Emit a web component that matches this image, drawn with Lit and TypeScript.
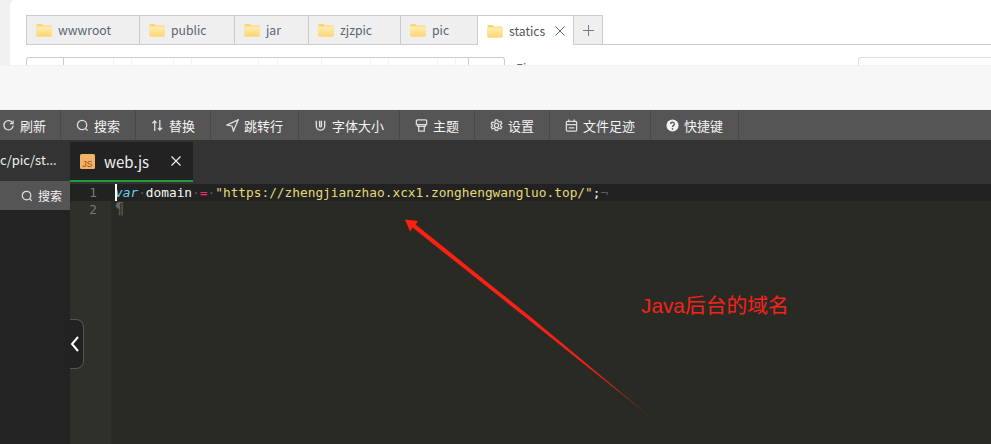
import { LitElement, html, css, svg } from "lit";
import { customElement } from "lit/decorators.js";

const folder = html`<svg class="folder" viewBox="0 0 16 14" width="16" height="14">
  <defs><linearGradient id="fg" x1="0" y1="0" x2="0" y2="1"><stop offset="0" stop-color="#ffeeb4"/><stop offset="1" stop-color="#ffd572"/></linearGradient></defs>
  <path d="M0.5 2a1 1 0 0 1 1-1h4l1.5 1.5H14.500a1 1 0 0 1 1 1V12.500a1 1 0 0 1-1 1h-13a1 1 0 0 1-1-1z" fill="#ffd36b"/>
  <rect x="0.500" y="3.500" width="15" height="10" rx="1" fill="url(#fg)"/>
</svg>`;

const I = (body: unknown) => html`<svg class="ico" viewBox="0 0 14 14" width="13" height="13" fill="none" stroke="#ddd" stroke-width="1.400">${body}</svg>`;

const tools = [
  { w: 61, t: "刷新", pr: 12, i: I(svg`<path d="M11.500 4.500A5 5 0 1 0 12 7"/><path d="M12 1.500V5H8.500" stroke-width="1.200"/>`) },
  { w: 75, t: "搜索", pr: 0, i: I(svg`<circle cx="6.500" cy="6.500" r="5"/><path d="M10 10l2.500 2.500"/>`) },
  { w: 75, t: "替换", pr: 0, i: I(svg`<path d="M4 13V2M1.500 4.500L4 2l2 2.500M9.500 1v11M7.500 9.500l2 2.500 2.500-2.500"/>`) },
  { w: 88, t: "跳转行", pr: 0, i: I(svg`<path d="M13 1L1 6.500l5.500 1L8 13z"/>`) },
  { w: 101, t: "字体大小", pr: 0, i: I(svg`<path d="M2.500 2v5.500a4.500 4.500 0 0 0 9 0V2M6 2v5.500a1 1 0 0 0 2 0V2" stroke-width="1.500"/>`) },
  { w: 75, t: "主题", pr: 0, i: I(svg`<path d="M3 6H1.500V2a1 1 0 0 1 1-1h9a1 1 0 0 1 1 1v4H11M3 6v2h8V6M4 8v5h6V8M1.500 6h11"/>`) },
  { w: 75, t: "设置", pr: 0, i: I(svg`<circle cx="7" cy="7" r="2.300"/><path d="M5.800 1h2.400l.4 1.600 1.500.7 1.500-.7 1.100 2-1.200 1.200v1.600l1.200 1.200-1.100 2-1.500-.7-1.500.7-.4 1.600H5.800l-.4-1.600-1.500-.7-1.500.7-1.100-2 1.200-1.200V6.400L1.300 5.200l1.100-2 1.500.7 1.500-.7z"/>`) },
  { w: 101, t: "文件足迹", pr: 0, i: I(svg`<rect x="1.500" y="2.500" width="11" height="10.500" rx="1"/><path d="M4 .5v3M10 .5v3M1.500 6h11M4 9.500h6"/>`) },
  { w: 88, t: "快捷键", pr: 0, i: html`<svg class="ico" viewBox="0 0 14 14" width="13" height="13"><circle cx="7" cy="7" r="6.500" fill="#f2f2f2"/><path d="M5 5.500a2 2 0 1 1 3 1.700c-.7.400-1 .8-1 1.500" fill="none" stroke="#555" stroke-width="1.400"/><circle cx="7" cy="10.600" r=".9" fill="#555"/></svg>` },
];

const tabs = [
  { n: "wwwroot", w: 114 }, { n: "public", w: 95 }, { n: "jar", w: 74 }, { n: "zjzpic", w: 92 }, { n: "pic", w: 77 },
];

// Gaps between the faint cell dividers of the second row, in px.
const cellGaps = [49, 17, 41, 17, 66, 18, 43, 48, 17, 48, 17];

@customElement("app-root")
export class AppRoot extends LitElement {
  static styles = css`
    :host { display: block; position: relative; width: 991px; height: 444px; overflow: hidden; background: #fff; font-family: "Noto Sans CJK SC", "Noto Sans", sans-serif; }
    .top { height: 65px; display: flex; background: #f1f1f1; }
    .card { flex: 1; margin-left: 10px; background: #fff; border-top-left-radius: 5px; padding: 15px 0 0 16px; overflow: hidden; }
    .tabs { display: flex; height: 30px; border-bottom: 1px solid #ccc; box-sizing: border-box; }
    .tab { display: flex; align-items: center; box-sizing: border-box; height: 30px; background: #efefef; border: 1px solid #ccc; border-left: 0; padding-left: 9px; font-size: 12.200px; color: #5a6473; gap: 6px; }
    .tab:first-child { border-left: 1px solid #ccc; }
    .tab.on { background: #fff; border-bottom: 0; width: 96px; color: #555; padding-left: 9px; gap: 6px; }
    .x { margin-left: 4px; }
    .tab.add { width: 29px; justify-content: center; padding: 0; }
    .folder { flex: none; }
    .row2 { display: flex; margin-top: 12px; height: 20px; }
    .seg { box-sizing: border-box; height: 20px; border: 1px solid #ccc; border-bottom: 0; }
    .seg.a { width: 38px; border-radius: 3px 0 0 0; }
    .seg.b { width: 404px; border-left: 0; border-right: 0; display: flex; }
    .seg.b i { display: block; flex: none; width: 1px; height: 8px; background: #f2f2f2; }
    .seg.c { width: 37px; border-radius: 0 3px 0 0; }
    .tiny { margin-left: 11px; padding-top: 5px; box-sizing: border-box; font-size: 12px; line-height: 12px; color: #666; height: 8px; overflow: hidden; width: 342px; flex: none; }
    .inp { flex: 1; box-sizing: border-box; height: 20px; border: 1px solid #dddde2; border-bottom: 0; border-radius: 3px 0 0 0; border-right: 0; }
    .band { height: 43px; background: #f7f7f7; border-top: 1px solid #f1f1f1; border-bottom: 1px solid #f0f0f0; }
    .tools { display: flex; height: 30px; background: #555; }
    .tool { box-sizing: border-box; height: 30px; display: flex; align-items: center; justify-content: center; gap: 5px; font-size: 13px; color: #f4f4f4; border-right: 1px solid #484848; flex: none; }
    .editor { display: flex; height: 304px; }
    .side { width: 70px; flex: none; background: #232323; }
    .path { height: 41px; background: #333; color: #f0f0f0; font-size: 13px; line-height: 40px; white-space: nowrap; }
    .find { height: 29px; background: #555; color: #f4f4f4; font-size: 12px; display: flex; align-items: center; justify-content: flex-end; gap: 5px; padding-right: 8px; }
    .find .ico { width: 12px; height: 12px; }
    .main { flex: 1; display: flex; flex-direction: column; background: #333; }
    .ftabs { height: 42px; flex: none; padding-top: 2px; box-sizing: border-box; }
    .ftab { width: 123px; height: 40px; box-sizing: border-box; background: #222; border-bottom: 2px solid #1f9d3a; display: flex; align-items: center; padding-left: 10px; color: #f0f0f0; font-size: 15px; }
    .ftab .name { margin-left: 9px; width: 55px; }
    .fx { margin-left: 12px; }
    .code { margin-top: 2px; flex: 1; display: grid; grid-template-columns: 41px 1fr; grid-template-rows: 17px 17px 1fr; font: 12.800px/17px "DejaVu Sans Mono", monospace; background: #2a2a25; }
    .num { background: #2f3029; color: #777; text-align: right; padding-right: 14px; }
    .num.cur { background: #222; }
    .gfill { background: #2f3029; }
    .ln { padding-left: 4px; white-space: pre; position: relative; }
    .ln.cur { background: #222; color: #f8f8f2; }
    .caret { position: absolute; left: 4px; top: 0; width: 2px; height: 17px; background: #fff; }
    .kw { color: #66d9ef; font-style: italic; }
    .op { color: #f92672; }
    .str { color: #e6db74; }
    .ws { color: #5c5d54; }
    .ws.big { font-size: 15px; color: #63645a; }
    .handle { position: absolute; left: 70px; top: 319px; width: 14px; height: 50px; box-sizing: border-box; background: #222; border: 1px solid #555; border-left: 0; border-radius: 0 8px 8px 0; display: flex; align-items: center; }
    .arrow { position: absolute; inset: 0; pointer-events: none; }
    .note { position: absolute; left: 641px; top: 291px; font-size: 20.800px; line-height: 30px; color: #f5221a; font-family: "Liberation Sans", "Noto Sans CJK SC", sans-serif; white-space: nowrap; }
  `;

  render() {
    return html`
      <div class="top"><div class="card">
        <div class="tabs">
          ${tabs.map(t => html`<div class="tab" style="width:${t.w}px">${folder}<span>${t.n}</span></div>`)}
          <div class="tab on">${folder}<span>statics</span>
            <svg class="x" viewBox="0 0 10 10" width="10" height="10" stroke="#666" stroke-width="1" fill="none"><path d="M.5.5l9 9M9.500.5l-9 9"/></svg></div>
          <div class="tab add"><svg viewBox="0 0 11 11" width="11" height="11" stroke="#778" stroke-width="1" fill="none"><path d="M5.500 0v11M0 5.500h11"/></svg></div>
        </div>
        <div class="row2">
          <div class="seg a"></div>
          <div class="seg b">${cellGaps.map(g => html`<i style="margin-left:${g}px"></i>`)}</div>
          <div class="seg c"></div>
          <div class="tiny">Ei</div>
          <div class="inp"></div>
        </div>
      </div></div>
      <div class="band"></div>
      <div class="tools">
        ${tools.map(t => html`<div class="tool" style="width:${t.w}px;padding-right:${t.pr}px">${t.i}<span>${t.t}</span></div>`)}
      </div>
      <div class="editor">
        <div class="side">
          <div class="path">c/pic/st...</div>
          <div class="find">${tools[1].i}<span>搜索</span></div>
        </div>
        <div class="main">
          <div class="ftabs"><div class="ftab">
            <svg viewBox="0 0 15 15" width="15" height="15"><rect width="15" height="15" rx="1.500" fill="#f3b366"/><text x="7.500" y="12.500" text-anchor="middle" font-size="8.500" fill="#a8431e" font-family="Liberation Sans">JS</text></svg>
            <span class="name">web.js</span>
            <svg class="fx" viewBox="0 0 10 10" width="10" height="10" stroke="#eee" stroke-width="1.200" fill="none"><path d="M.5.5l9 9M9.500.5l-9 9"/></svg>
          </div></div>
          <div class="code">
            <div class="num cur">1</div>
            <div class="ln cur"><span class="caret"></span><span class="kw">var</span><span class="ws">·</span>domain<span class="ws">·</span><span class="op">=</span><span class="ws">·</span><span class="str">"https://zhengjianzhao.xcx1.zonghengwangluo.top/"</span>;<span class="ws">¬</span></div>
            <div class="num">2</div>
            <div class="ln"><span class="ws big">¶</span></div>
            <div class="gfill"></div>
            <div></div>
          </div>
        </div>
      </div>
      <div class="handle"><svg viewBox="0 0 10 16" width="10" height="16" fill="none" stroke="#fff" stroke-width="2"><path d="M8 1L2 8l6 7"/></svg></div>
      <svg class="arrow" viewBox="0 0 991 444" width="991" height="444">
        <defs><linearGradient id="ag" gradientUnits="userSpaceOnUse" x1="405" y1="219" x2="650" y2="417">
          <stop offset="0" stop-color="#ff2010"/><stop offset=".75" stop-color="#f5201a"/><stop offset="1" stop-color="#7a2a20"/></linearGradient></defs>
        <path d="M405 219.500L418 221L415.500 224.500L530 316.500L651 417.500L527 318.500L412.500 227.500L410 231.500Z" fill="url(#ag)"/>
      </svg>
      <div class="note">Java后台的域名</div>
    `;
  }
}
